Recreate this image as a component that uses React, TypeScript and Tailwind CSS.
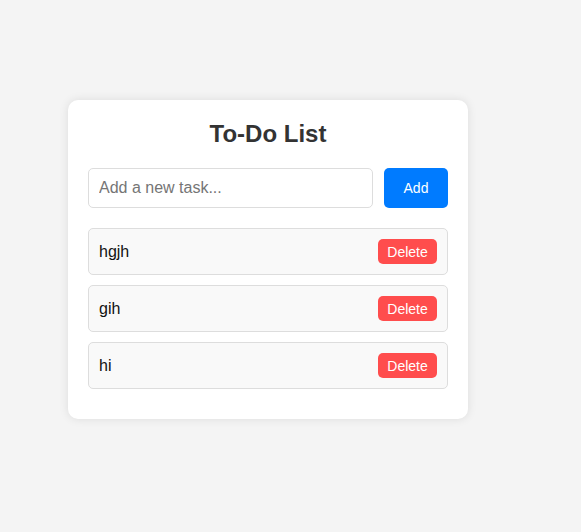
import { useState } from "react"

export default function App() {
  const [tasks, setTasks] = useState<string[]>(["hgjh", "gih", "hi"])
  const [text, setText] = useState("")

  const add = () => {
    if (!text.trim()) return
    setTasks([...tasks, text.trim()])
    setText("")
  }

  return (
    <div className="min-h-[532px] bg-[#f4f4f4] pt-[100px] pl-[68px] font-['Liberation_Sans',Arial,sans-serif]">
      <div className="w-[400px] rounded-[10px] bg-white p-5 shadow-[0_0_10px_rgba(0,0,0,0.1)]">
        <h2 className="mb-5 text-center text-2xl leading-7 font-bold text-[#333]">To-Do List</h2>

        {/* input row */}
        <div className="mb-5 flex gap-[11px]">
          <input
            value={text}
            onChange={(e) => setText(e.target.value)}
            placeholder="Add a new task..."
            className="h-10 flex-1 rounded-[5px] border border-[#ddd] px-[10px] text-base text-black outline-none placeholder:text-[#757575]"
          />
          <button
            onClick={add}
            className="h-10 w-16 rounded-[5px] bg-[#007bff] text-sm text-white"
          >
            Add
          </button>
        </div>

        {/* task list */}
        <ul className="flex flex-col gap-[10px] pb-[10px]">
          {tasks.map((t, i) => (
            <li
              key={i}
              className="flex h-[47px] items-center justify-between rounded-[5px] border border-[#ddd] bg-[#f9f9f9] px-[10px] text-base text-[#111]"
            >
              <span>{t}</span>
              <button
                onClick={() => setTasks(tasks.filter((_, j) => j !== i))}
                className="h-[25px] w-[59px] rounded-[5px] bg-[#ff4d4d] text-sm text-white"
              >
                Delete
              </button>
            </li>
          ))}
        </ul>
      </div>
    </div>
  )
}
